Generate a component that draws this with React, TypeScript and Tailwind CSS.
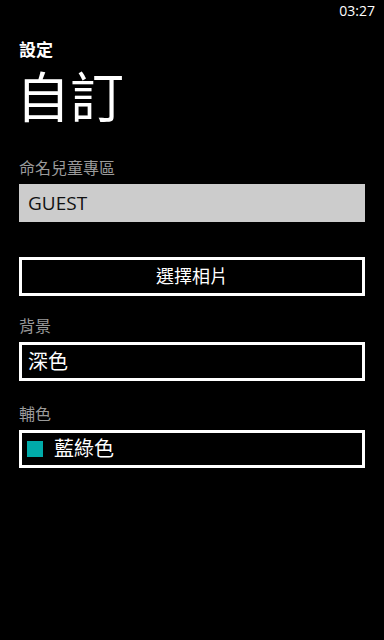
const font = {
  fontFamily: '"Open Sans", "Noto Sans CJK TC", sans-serif',
};

function Label({ text, className }: { text: string; className?: string }) {
  return (
    <div className={`h-[20px] text-[16px] leading-[20px] text-[#9a9a9a] ${className ?? ""}`}>
      {text}
    </div>
  );
}

export default function App() {
  return (
    <div className="min-h-screen w-full bg-black text-white" style={font}>
      {/* status bar */}
      <div className="flex h-[32px] justify-end pr-[9px] pt-[3px] text-[14px] leading-[16px]">
        03:27
      </div>

      <div className="px-[19px]">
        <div className="mt-[8px] h-[20px] text-[17px] font-semibold leading-[20px]">設定</div>
        <div className="-ml-[3px] mt-[8px] h-[58px] text-[54px] leading-[58px]">自訂</div>

        <Label text="命名兒童專區" className="mt-[32px]" />
        <div className="mt-[6px] flex h-[38px] items-center bg-[#cccccc] px-[9px] text-[19px] text-[#111]">
          GUEST
        </div>

        <button className="mt-[35px] flex h-[39px] w-full items-center justify-center border-[3px] border-white text-[18px]">
          選擇相片
        </button>

        <Label text="背景" className="mt-[20px]" />
        <div className="mt-[6px] flex h-[39px] items-center border-[3px] border-white px-[6px] text-[20px]">
          深色
        </div>

        <Label text="輔色" className="mt-[23px]" />
        <div className="mt-[6px] flex h-[38px] items-center gap-[11px] border-[3px] border-white px-[5px] text-[20px]">
          <span className="h-[16px] w-[16px] bg-[#00aba9]" />
          <span>藍綠色</span>
        </div>
      </div>
    </div>
  );
}
